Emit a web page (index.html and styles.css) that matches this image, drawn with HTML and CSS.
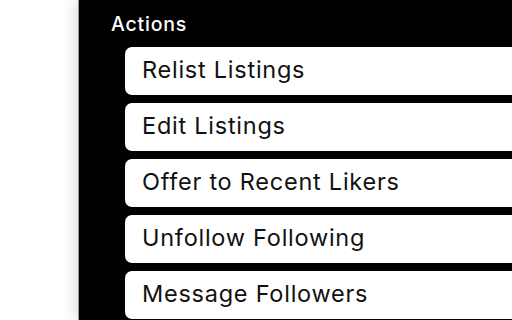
FILE: index.html
```html
<!DOCTYPE html>
<html lang="en">
<head>
    <meta charset="UTF-8">
    <meta name="viewport" content="width=device-width, initial-scale=1.0">
    <title>Actions</title>
    <link rel="stylesheet" href="styles.css">
</head>
<body>
    <!-- Left strip of the page behind the panel -->
    <div class="page-edge"></div>

    <!-- Actions panel -->
    <div class="panel">
        <div class="panel-title">Actions</div>
        <div class="action-list">
            <div class="action">Relist Listings</div>
            <div class="action">Edit Listings</div>
            <div class="action">Offer to Recent Likers</div>
            <div class="action">Unfollow Following</div>
            <div class="action">Message Followers</div>
        </div>
    </div>
</body>
</html>
```

FILE: styles.css
```css
/* Basic page settings */
html, body {
    margin: 0;
    padding: 0;
    height: 100%;
    overflow: hidden;
}

body {
    display: flex;
    font-family: Inter, "Noto Sans", sans-serif;
    background: #ffffff;
}

/* White strip left of the panel */
.page-edge {
    width: 78px;
    flex-shrink: 0;
    background: #ffffff;
}

/* Black panel with a soft shadow on its left side */
.panel {
    flex: 1;
    background: #000000;
    border-left: 1px solid #9a9a9a;
    box-shadow: -4px 0 12px rgba(0, 0, 0, 0.12);
    padding-top: 13px;
    display: flex;
    flex-direction: column;
}

/* Section heading */
.panel-title {
    color: #ffffff;
    font-size: 19.5px;
    font-weight: 500;
    letter-spacing: 0.8px;
    line-height: 22px;
    padding-left: 32px;
    margin-bottom: 12px;
}

/* Stack of action buttons */
.action-list {
    display: flex;
    flex-direction: column;
    gap: 8px;
    padding-left: 46px;
}

.action {
    height: 48px;
    box-sizing: border-box;
    padding-bottom: 3px;
    display: flex;
    align-items: center;
    background: #ffffff;
    border-radius: 7px 0 0 7px;
    padding-left: 17px;
    font-size: 23.5px;
    letter-spacing: 0.75px;
    color: #111111;
}
```
